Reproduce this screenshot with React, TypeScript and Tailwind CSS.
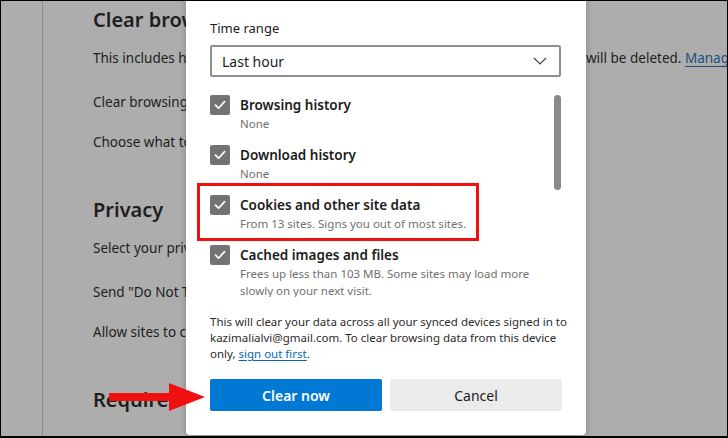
import React from 'react';

const font = "font-['Segoe_UI','Noto_Sans',sans-serif]";

const Check: React.FC = () => (
  <div className="w-5 h-5 shrink-0 rounded-[2px] bg-[#737373] flex items-center justify-center">
    <svg width="14" height="14" viewBox="0 0 14 14" fill="none">
      <path d="M2.5 7.2 L5.6 10.2 L11.6 3.6" stroke="#fff" strokeWidth="1.7" strokeLinecap="round" strokeLinejoin="round" />
    </svg>
  </div>
);

const items = [
  { title: 'Browsing history', sub: ['None'] },
  { title: 'Download history', sub: ['None'] },
  { title: 'Cookies and other site data', sub: ['From 13 sites. Signs you out of most sites.'], marked: true },
  {
    title: 'Cached images and files',
    sub: ['Frees up less than 103 MB. Some sites may load more', 'slowly on your next visit.'],
  },
];

const App: React.FC = () => {
  return (
    <div className={`relative w-[728px] h-[438px] overflow-hidden bg-[#adadad] border border-b-2 border-black ${font}`}>
      {/* Settings page behind the dialog */}
      <div className="flex h-full">
        <div className="w-[42px] h-full shrink-0 border-r border-[#8b8b8b]" />
        <div className="pl-[50px] pt-[6px] text-[#1e1e1e] flex-1 text-[13.5px] leading-[20px]">
          <h2 className="text-[20px] font-semibold leading-[26px]">Clear browsing data</h2>
          <div className="flex mt-[15px] whitespace-nowrap">
            <span className="w-[493px] overflow-hidden">This includes history, passwords, cookies, and more. Only data from this profile</span>
            <span>
              will be deleted. <span className="text-[#1a4f80] underline underline-offset-[3px]">Manage your data</span>
            </span>
          </div>
          <p className="mt-[24px]">Clear browsing data now</p>
          <p className="mt-[20px]">Choose what to clear every time you close the browser</p>
          <h2 className="mt-[45px] text-[20px] font-semibold leading-[26px]">Privacy</h2>
          <p className="mt-[15px]">Select your privacy settings for Microsoft Edge</p>
          <p className="mt-[24px]">Send "Do Not Track" requests</p>
          <p className="mt-[20px]">Allow sites to check if you have payment methods saved</p>
          <h2 className="mt-[45px] text-[20px] font-semibold leading-[26px]">Required diagnostic data</h2>
        </div>
      </div>

      {/* Dialog */}
      <div className="absolute top-[-1px] left-[185px] w-[400px] h-[435px] bg-white rounded-b-[4px] shadow-[0_0_6px_rgba(0,0,0,0.25)] px-[24px] pt-[19px]">
        <p className="text-[13px] leading-[18px] text-[#1b1b1b]">Time range</p>
        <div className="mt-[8px] h-[32px] w-[351px] border-2 border-[#8f8f8f] rounded-[2px] flex items-center justify-between pl-[10px] pr-[12px]">
          <span className="text-[14px] text-[#1b1b1b]">Last hour</span>
          <svg width="14" height="8" viewBox="0 0 14 8" fill="none">
            <path d="M1 1 L7 7 L13 1" stroke="#444" strokeWidth="1.2" />
          </svg>
        </div>

        <div className="mt-[11px] ml-[-14px] pl-[14px] h-[209px] flex overflow-hidden">
          <div className="flex-1 pt-[7px] flex flex-col gap-[13px]">
            {items.map((it) => (
              <div key={it.title} className="relative flex gap-[10px]">
                {it.marked && (
                  <div className="absolute left-[-13px] top-[-12px] w-[282px] h-[58px] border-[3px] border-[#f01010]" />
                )}
                <Check />
                <div>
                  <p className="text-[13.5px] leading-[20px] font-semibold text-[#1b1b1b]">{it.title}</p>
                  {it.sub.map((s) => (
                    <p key={s} className="text-[11.5px] leading-[17px] text-[#6f6f6f]">{s}</p>
                  ))}
                </div>
              </div>
            ))}
          </div>
          <div className="w-[7px] mr-[1px] pt-[7px]">
            <div className="h-[95px] rounded-full bg-[#8a8a8a]" />
          </div>
        </div>

        <p className="mt-[17px] text-[11.5px] leading-[16px] text-[#2b2b2b] whitespace-nowrap">
          This will clear your data across all your synced devices signed in to
          <br />
          kazimalialvi@gmail.com. To clear browsing data from this device
          <br />
          only, <span className="text-[#0067b8] underline underline-offset-2">sign out first</span>.
        </p>

        <div className="mt-[17px] flex gap-[8px]">
          <button className="w-[172px] h-[32px] rounded-[2px] bg-[#0078d4] text-white text-[14px] font-semibold">
            Clear now
          </button>
          <button className="w-[172px] h-[32px] rounded-[2px] bg-[#ebebeb] text-[#1b1b1b] text-[14px]">
            Cancel
          </button>
        </div>
      </div>

      {/* Red arrow annotation */}
      <svg className="absolute left-[106px] top-[381px]" width="100" height="30" viewBox="0 0 100 30">
        <rect x="2" y="11" width="66" height="8" fill="#f01010" />
        <polygon points="62,1 98,15 62,29" fill="#f01010" />
      </svg>
    </div>
  );
};

export default App;
